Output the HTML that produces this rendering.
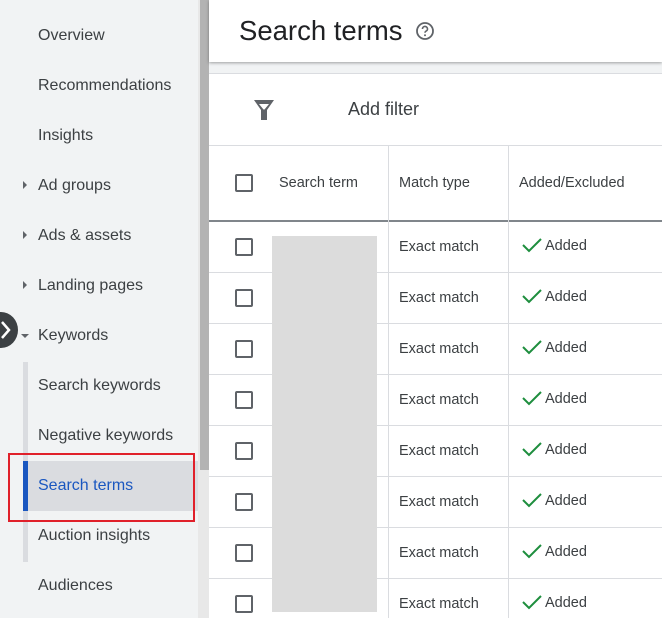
<!DOCTYPE html><html><head><style>
*{margin:0;padding:0;box-sizing:border-box}
html,body{width:662px;height:618px;overflow:hidden}
body{position:relative;background:#fff;font-family:"Liberation Sans",Arial,sans-serif;color:#3c4043}
.sb{position:absolute;left:0;top:0;width:198px;height:618px;background:#f1f3f4}
.it{position:absolute;left:38px;font-size:16px;line-height:20px}
.ar{position:absolute;left:22px;width:0;height:0}
.abs{position:absolute}
.cb{position:absolute;left:235px;width:18px;height:18px;border:2px solid #5f6368;border-radius:2px}
.row{position:absolute;left:209px;width:453px;height:51px;border-bottom:1px solid #dadce0}
.mt{position:absolute;left:399px;font-size:14.5px;color:#3c4043}
.ad{position:absolute;left:522px;font-size:14.5px;color:#3c4043}
.ad svg{vertical-align:-3px;margin-right:3px}
</style></head><body>
<div class="sb"></div>
<div class="it" style="top:26px">Overview</div>
<div class="it" style="top:76px">Recommendations</div>
<div class="it" style="top:126px">Insights</div>
<div class="ar" style="top:181px;border-left:4px solid #5f6368;border-top:4px solid transparent;border-bottom:4px solid transparent;left:23px"></div>
<div class="it" style="top:176px">Ad groups</div>
<div class="ar" style="top:231px;border-left:4px solid #5f6368;border-top:4px solid transparent;border-bottom:4px solid transparent;left:23px"></div>
<div class="it" style="top:226px">Ads &amp; assets</div>
<div class="ar" style="top:281px;border-left:4px solid #5f6368;border-top:4px solid transparent;border-bottom:4px solid transparent;left:23px"></div>
<div class="it" style="top:276px">Landing pages</div>
<div class="ar" style="top:334px;border-top:4px solid #5f6368;border-left:4px solid transparent;border-right:4px solid transparent;left:21px"></div>
<div class="it" style="top:326px">Keywords</div>
<div class="abs" style="left:23px;top:362px;width:5px;height:200px;background:#dadce0"></div>
<div class="abs" style="left:23px;top:461px;width:175px;height:50px;background:#dadce0"></div>
<div class="abs" style="left:23px;top:461px;width:5px;height:50px;background:#1a57c0"></div>
<div class="it" style="top:376px">Search keywords</div>
<div class="it" style="top:426px">Negative keywords</div>
<div class="it" style="top:476px;color:#1a57c0">Search terms</div>
<div class="it" style="top:526px">Auction insights</div>
<div class="it" style="top:576px">Audiences</div>
<div class="abs" style="left:8px;top:453px;width:187px;height:69px;border:2px solid #e0202a"></div>
<div class="abs" style="left:-16px;top:312px;width:34px;height:36px;border-radius:50%;background:#3c4043"></div>
<svg class="abs" style="left:0;top:318px" width="14" height="24"><path d="M2 4 L9 12 L2 20" stroke="#fff" stroke-width="2.5" fill="none"/></svg>
<div class="abs" style="left:198px;top:0;width:11px;height:618px;background:#e8e8e8"></div>
<div class="abs" style="left:200px;top:0;width:9px;height:470px;background:#b3b3b3"></div>
<div class="abs" style="left:209px;top:0;width:453px;height:62px;background:#fff;box-shadow:0 1px 3px rgba(0,0,0,.35);z-index:2"></div>
<div class="abs" style="left:239px;top:15px;font-size:27.5px;color:#202124;z-index:3">Search terms</div>
<svg class="abs" style="left:415px;top:21px;z-index:3" width="20" height="20" viewBox="0 0 20 20"><circle cx="10" cy="10" r="8" stroke="#5f6368" stroke-width="1.8" fill="none"/><path d="M7.5 8a2.5 2.5 0 1 1 3.3 2.3c-.6.3-.8.7-.8 1.4" stroke="#5f6368" stroke-width="1.6" fill="none"/><circle cx="10" cy="14.3" r="1" fill="#5f6368"/></svg>
<div class="abs" style="left:209px;top:62px;width:453px;height:12px;background:#f1f3f4;border-bottom:1px solid #dadce0"></div>
<svg class="abs" style="left:254px;top:100px" width="20" height="20"><path d="M0 0 H20 L13 10 V20 H7 V10 Z" fill="#5f6368"/><path d="M5 4 H15 L10.5 9.5 H9.5 Z" fill="#fff"/></svg>
<div class="abs" style="left:348px;top:99px;font-size:18px;color:#3c4043">Add filter</div>
<div class="abs" style="left:209px;top:145px;width:453px;height:1px;background:#dadce0"></div>
<div class="abs" style="left:209px;top:220px;width:453px;height:2px;background:#80868b"></div>
<div class="abs" style="left:388px;top:146px;width:1px;height:472px;background:#dadce0"></div>
<div class="abs" style="left:508px;top:146px;width:1px;height:472px;background:#dadce0"></div>
<div class="cb" style="top:174px"></div>
<div class="abs" style="left:279px;top:175px;font-size:14.5px;color:#3c4043">Search term</div>
<div class="abs" style="left:399px;top:175px;font-size:14.5px;color:#3c4043">Match type</div>
<div class="abs" style="left:519px;top:175px;font-size:14.5px;color:#3c4043">Added/Excluded</div>
<div class="row" style="top:222px"></div><div class="row" style="top:273px"></div><div class="row" style="top:324px"></div><div class="row" style="top:375px"></div><div class="row" style="top:426px"></div><div class="row" style="top:477px"></div><div class="row" style="top:528px"></div><div class="row" style="top:579px"></div>
<div class="abs" style="left:272px;top:236px;width:105px;height:376px;background:#dcdcdc"></div>
<svg width="0" height="0" style="position:absolute"><defs><symbol id="ck" viewBox="0 0 20 16"><path d="M1 8 L7 14 L19 2" stroke="#1e8e3e" stroke-width="2" fill="none"/></symbol></defs></svg>
<div class="cb" style="top:238px"></div><div class="mt" style="top:239px">Exact match</div><div class="ad" style="top:237px"><svg width="20" height="16"><use href="#ck"/></svg>Added</div>
<div class="cb" style="top:289px"></div><div class="mt" style="top:290px">Exact match</div><div class="ad" style="top:288px"><svg width="20" height="16"><use href="#ck"/></svg>Added</div>
<div class="cb" style="top:340px"></div><div class="mt" style="top:341px">Exact match</div><div class="ad" style="top:339px"><svg width="20" height="16"><use href="#ck"/></svg>Added</div>
<div class="cb" style="top:391px"></div><div class="mt" style="top:392px">Exact match</div><div class="ad" style="top:390px"><svg width="20" height="16"><use href="#ck"/></svg>Added</div>
<div class="cb" style="top:442px"></div><div class="mt" style="top:443px">Exact match</div><div class="ad" style="top:441px"><svg width="20" height="16"><use href="#ck"/></svg>Added</div>
<div class="cb" style="top:493px"></div><div class="mt" style="top:494px">Exact match</div><div class="ad" style="top:492px"><svg width="20" height="16"><use href="#ck"/></svg>Added</div>
<div class="cb" style="top:544px"></div><div class="mt" style="top:545px">Exact match</div><div class="ad" style="top:543px"><svg width="20" height="16"><use href="#ck"/></svg>Added</div>
<div class="cb" style="top:595px"></div><div class="mt" style="top:596px">Exact match</div><div class="ad" style="top:594px"><svg width="20" height="16"><use href="#ck"/></svg>Added</div>
</body></html>
